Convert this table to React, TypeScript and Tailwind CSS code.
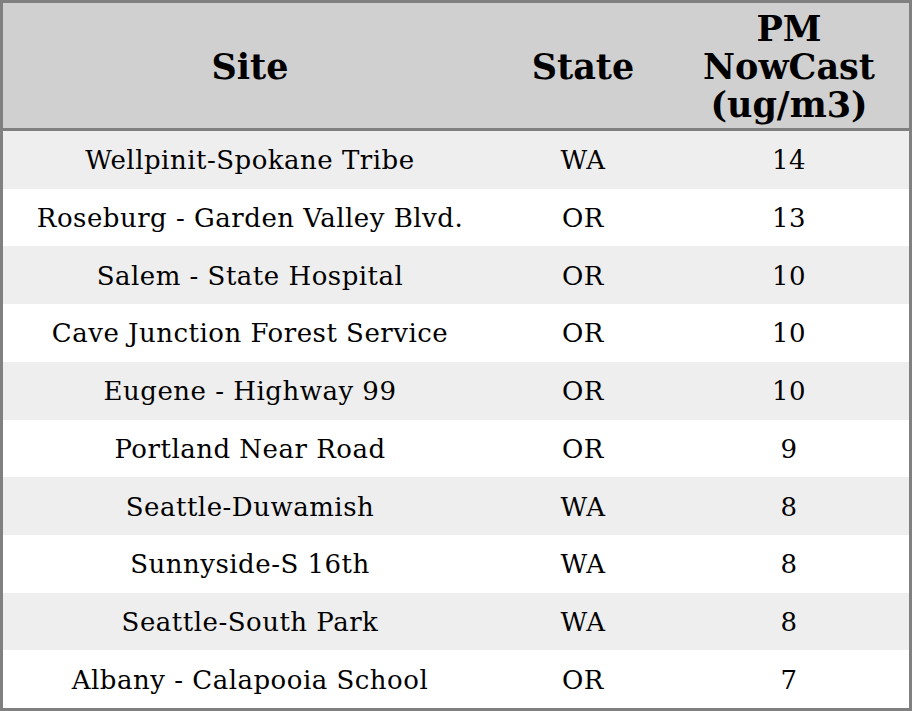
import React from "react";

const rows = [
  ["Wellpinit-Spokane Tribe", "WA", "14"],
  ["Roseburg - Garden Valley Blvd.", "OR", "13"],
  ["Salem - State Hospital", "OR", "10"],
  ["Cave Junction Forest Service", "OR", "10"],
  ["Eugene - Highway 99", "OR", "10"],
  ["Portland Near Road", "OR", "9"],
  ["Seattle-Duwamish", "WA", "8"],
  ["Sunnyside-S 16th", "WA", "8"],
  ["Seattle-South Park", "WA", "8"],
  ["Albany - Calapooia School", "OR", "7"],
];

const App = () => {
  return (
    <main className="w-[912px] h-[711px] bg-white font-['DejaVu_Serif',serif] text-black">
      <div className="h-full border-[3px] border-[#808080] flex flex-col">
        <div className="h-[123px] pt-[2px] bg-[#d0d0d0] grid grid-cols-[494px_172px_240px] items-center text-center font-bold text-[35px] leading-[38px] border-b-[3px] border-[#808080] box-content">
          <div>Site</div>
          <div>State</div>
          <div>
            PM
            <br />
            NowCast
            <br />
            (ug/m3)
          </div>
        </div>
        <div className="flex-1 flex flex-col">
          {rows.map((r, i) => (
            <div
              key={i}
              className={`flex-1 pt-[2px] grid grid-cols-[494px_172px_240px] items-center text-center text-[26px] tracking-[0.5px] ${
                i % 2 === 0 ? "bg-[#eeeeee]" : "bg-white"
              }`}
            >
              <div>{r[0]}</div>
              <div>{r[1]}</div>
              <div>{r[2]}</div>
            </div>
          ))}
        </div>
      </div>
    </main>
  );
};

export default App;
